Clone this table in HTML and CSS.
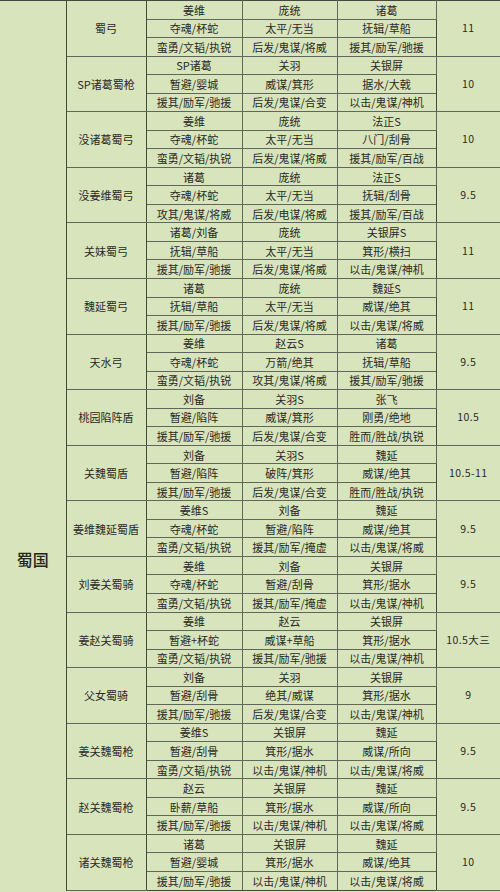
FILE: index.html
```html
<!DOCTYPE html>
<html lang="zh-CN">
<head>
<meta charset="utf-8">
<title>蜀国阵容</title>
<link rel="stylesheet" href="styles.css">
</head>
<body>
<table class="lineup">
  <colgroup>
    <col class="c-nation"><col class="c-name"><col class="c-gen"><col class="c-gen2"><col class="c-gen3"><col class="c-score">
  </colgroup>
  <tbody>
    <tr class="g-start"><td class="nation" rowspan="48"><span class="nation-label">蜀国</span></td><td class="name" rowspan="3">蜀弓</td><td>姜维</td><td>庞统</td><td>诸葛</td><td class="score" rowspan="3">11</td></tr>
    <tr><td>夺魂/杯蛇</td><td>太平/无当</td><td>抚辑/草船</td></tr>
    <tr><td>蛮勇/文韬/执锐</td><td>后发/鬼谋/将威</td><td>援其/励军/驰援</td></tr>

    <tr class="g-start"><td class="name" rowspan="3">SP诸葛蜀枪</td><td>SP诸葛</td><td>关羽</td><td>关银屏</td><td class="score" rowspan="3">10</td></tr>
    <tr><td>暂避/婴城</td><td>威谋/箕形</td><td>据水/大戟</td></tr>
    <tr><td>援其/励军/驰援</td><td>后发/鬼谋/合变</td><td>以击/鬼谋/神机</td></tr>

    <tr class="g-start"><td class="name" rowspan="3">没诸葛蜀弓</td><td>姜维</td><td>庞统</td><td>法正S</td><td class="score" rowspan="3">10</td></tr>
    <tr><td>夺魂/杯蛇</td><td>太平/无当</td><td>八门/刮骨</td></tr>
    <tr><td>蛮勇/文韬/执锐</td><td>后发/鬼谋/将威</td><td>援其/励军/百战</td></tr>

    <tr class="g-start"><td class="name" rowspan="3">没姜维蜀弓</td><td>诸葛</td><td>庞统</td><td>法正S</td><td class="score" rowspan="3">9.5</td></tr>
    <tr><td>夺魂/杯蛇</td><td>太平/无当</td><td>抚辑/刮骨</td></tr>
    <tr><td>攻其/鬼谋/将威</td><td>后发/电谋/将威</td><td>援其/励军/百战</td></tr>

    <tr class="g-start"><td class="name" rowspan="3">关妹蜀弓</td><td>诸葛/刘备</td><td>庞统</td><td>关银屏S</td><td class="score" rowspan="3">11</td></tr>
    <tr><td>抚辑/草船</td><td>太平/无当</td><td>箕形/横扫</td></tr>
    <tr><td>援其/励军/驰援</td><td>后发/鬼谋/将威</td><td>以击/鬼谋/神机</td></tr>

    <tr class="g-start"><td class="name" rowspan="3">魏延蜀弓</td><td>诸葛</td><td>庞统</td><td>魏延S</td><td class="score" rowspan="3">11</td></tr>
    <tr><td>抚辑/草船</td><td>太平/无当</td><td>威谋/绝其</td></tr>
    <tr><td>援其/励军/驰援</td><td>后发/鬼谋/将威</td><td>以击/鬼谋/将威</td></tr>

    <tr class="g-start"><td class="name" rowspan="3">天水弓</td><td>姜维</td><td>赵云S</td><td>诸葛</td><td class="score" rowspan="3">9.5</td></tr>
    <tr><td>夺魂/杯蛇</td><td>万箭/绝其</td><td>抚辑/草船</td></tr>
    <tr><td>蛮勇/文韬/执锐</td><td>攻其/鬼谋/将威</td><td>援其/励军/驰援</td></tr>

    <tr class="g-start"><td class="name" rowspan="3">桃园陷阵盾</td><td>刘备</td><td>关羽S</td><td>张飞</td><td class="score" rowspan="3">10.5</td></tr>
    <tr><td>暂避/陷阵</td><td>威谋/箕形</td><td>刚勇/绝地</td></tr>
    <tr><td>援其/励军/驰援</td><td>后发/鬼谋/合变</td><td>胜而/胜战/执锐</td></tr>

    <tr class="g-start"><td class="name" rowspan="3">关魏蜀盾</td><td>刘备</td><td>关羽S</td><td>魏延</td><td class="score" rowspan="3">10.5-11</td></tr>
    <tr><td>暂避/陷阵</td><td>破阵/箕形</td><td>威谋/绝其</td></tr>
    <tr><td>援其/励军/驰援</td><td>后发/鬼谋/合变</td><td>胜而/胜战/执锐</td></tr>

    <tr class="g-start"><td class="name" rowspan="3">姜维魏延蜀盾</td><td>姜维S</td><td>刘备</td><td>魏延</td><td class="score" rowspan="3">9.5</td></tr>
    <tr><td>夺魂/杯蛇</td><td>暂避/陷阵</td><td>威谋/绝其</td></tr>
    <tr><td>蛮勇/文韬/执锐</td><td>援其/励军/掩虚</td><td>以击/鬼谋/将威</td></tr>

    <tr class="g-start"><td class="name" rowspan="3">刘姜关蜀骑</td><td>姜维</td><td>刘备</td><td>关银屏</td><td class="score" rowspan="3">9.5</td></tr>
    <tr><td>夺魂/杯蛇</td><td>暂避/刮骨</td><td>箕形/据水</td></tr>
    <tr><td>蛮勇/文韬/执锐</td><td>援其/励军/掩虚</td><td>以击/鬼谋/神机</td></tr>

    <tr class="g-start"><td class="name" rowspan="3">姜赵关蜀骑</td><td>姜维</td><td>赵云</td><td>关银屏</td><td class="score" rowspan="3">10.5大三</td></tr>
    <tr><td>暂避+杯蛇</td><td>威谋+草船</td><td>箕形/据水</td></tr>
    <tr><td>蛮勇/文韬/执锐</td><td>援其/励军/驰援</td><td>以击/鬼谋/神机</td></tr>

    <tr class="g-start"><td class="name" rowspan="3">父女蜀骑</td><td>刘备</td><td>关羽</td><td>关银屏</td><td class="score" rowspan="3">9</td></tr>
    <tr><td>暂避/刮骨</td><td>绝其/威谋</td><td>箕形/据水</td></tr>
    <tr><td>援其/励军/驰援</td><td>后发/鬼谋/合变</td><td>以击/鬼谋/神机</td></tr>

    <tr class="g-start"><td class="name" rowspan="3">姜关魏蜀枪</td><td>姜维S</td><td>关银屏</td><td>魏延</td><td class="score" rowspan="3">9.5</td></tr>
    <tr><td>暂避/刮骨</td><td>箕形/据水</td><td>威谋/所向</td></tr>
    <tr><td>蛮勇/文韬/执锐</td><td>以击/鬼谋/神机</td><td>以击/鬼谋/将威</td></tr>

    <tr class="g-start"><td class="name" rowspan="3">赵关魏蜀枪</td><td>赵云</td><td>关银屏</td><td>魏延</td><td class="score" rowspan="3">9.5</td></tr>
    <tr><td>卧薪/草船</td><td>箕形/据水</td><td>威谋/所向</td></tr>
    <tr><td>援其/励军/驰援</td><td>以击/鬼谋/神机</td><td>以击/鬼谋/将威</td></tr>

    <tr class="g-start"><td class="name" rowspan="3">诸关魏蜀枪</td><td>诸葛</td><td>关银屏</td><td>魏延</td><td class="score" rowspan="3">10</td></tr>
    <tr><td>暂避/婴城</td><td>箕形/据水</td><td>威谋/绝其</td></tr>
    <tr class="g-end"><td>援其/励军/驰援</td><td>以击/鬼谋/神机</td><td>以击/鬼谋/将威</td></tr>
  </tbody>
</table>
</body>
</html>
```

FILE: styles.css
```css
html, body {
  margin: 0;
  padding: 0;
  background: #d8e4bc;
  overflow: hidden;
}

.lineup {
  width: 500px;
  table-layout: fixed;
  border-collapse: collapse;
  font-family: "Noto Sans CJK SC", "Noto Sans", sans-serif;
  font-size: 11px;
  color: #2a2a26;
  background: #d8e4bc;
}

.c-nation { width: 66px; }
.c-name { width: 80px; }
.c-gen { width: 96px; }
.c-gen2 { width: 95px; }
.c-gen3 { width: 99px; }
.c-score { width: 64px; }

.lineup tr {
  height: 18.54px;
}

.lineup td {
  padding: 0;
  text-align: center;
  vertical-align: middle;
  line-height: 14px;
  white-space: nowrap;
  border: 1px solid #62665a;
}

.lineup tr.g-start td {
  border-top: 1px solid #45483d;
}

.lineup tr.g-end td {
  border-bottom: 1px solid #45483d;
}

.lineup td.nation {
  border-top: none;
  border-left: none;
  border-bottom: none;
  border-right: 1px solid #45483d;
  vertical-align: top;
}

.nation-label {
  display: block;
  margin-top: 547px;
  font-size: 16px;
  line-height: 22px;
  font-weight: 500;
  color: #262622;
}

.lineup td.name {
  font-size: 11px;
  border-right: 1px solid #45483d;
}

.lineup td.score {
  border-right: none;
  border-left: 1px solid #45483d;
  font-size: 10.5px;
  letter-spacing: 0.4px;
}
```
